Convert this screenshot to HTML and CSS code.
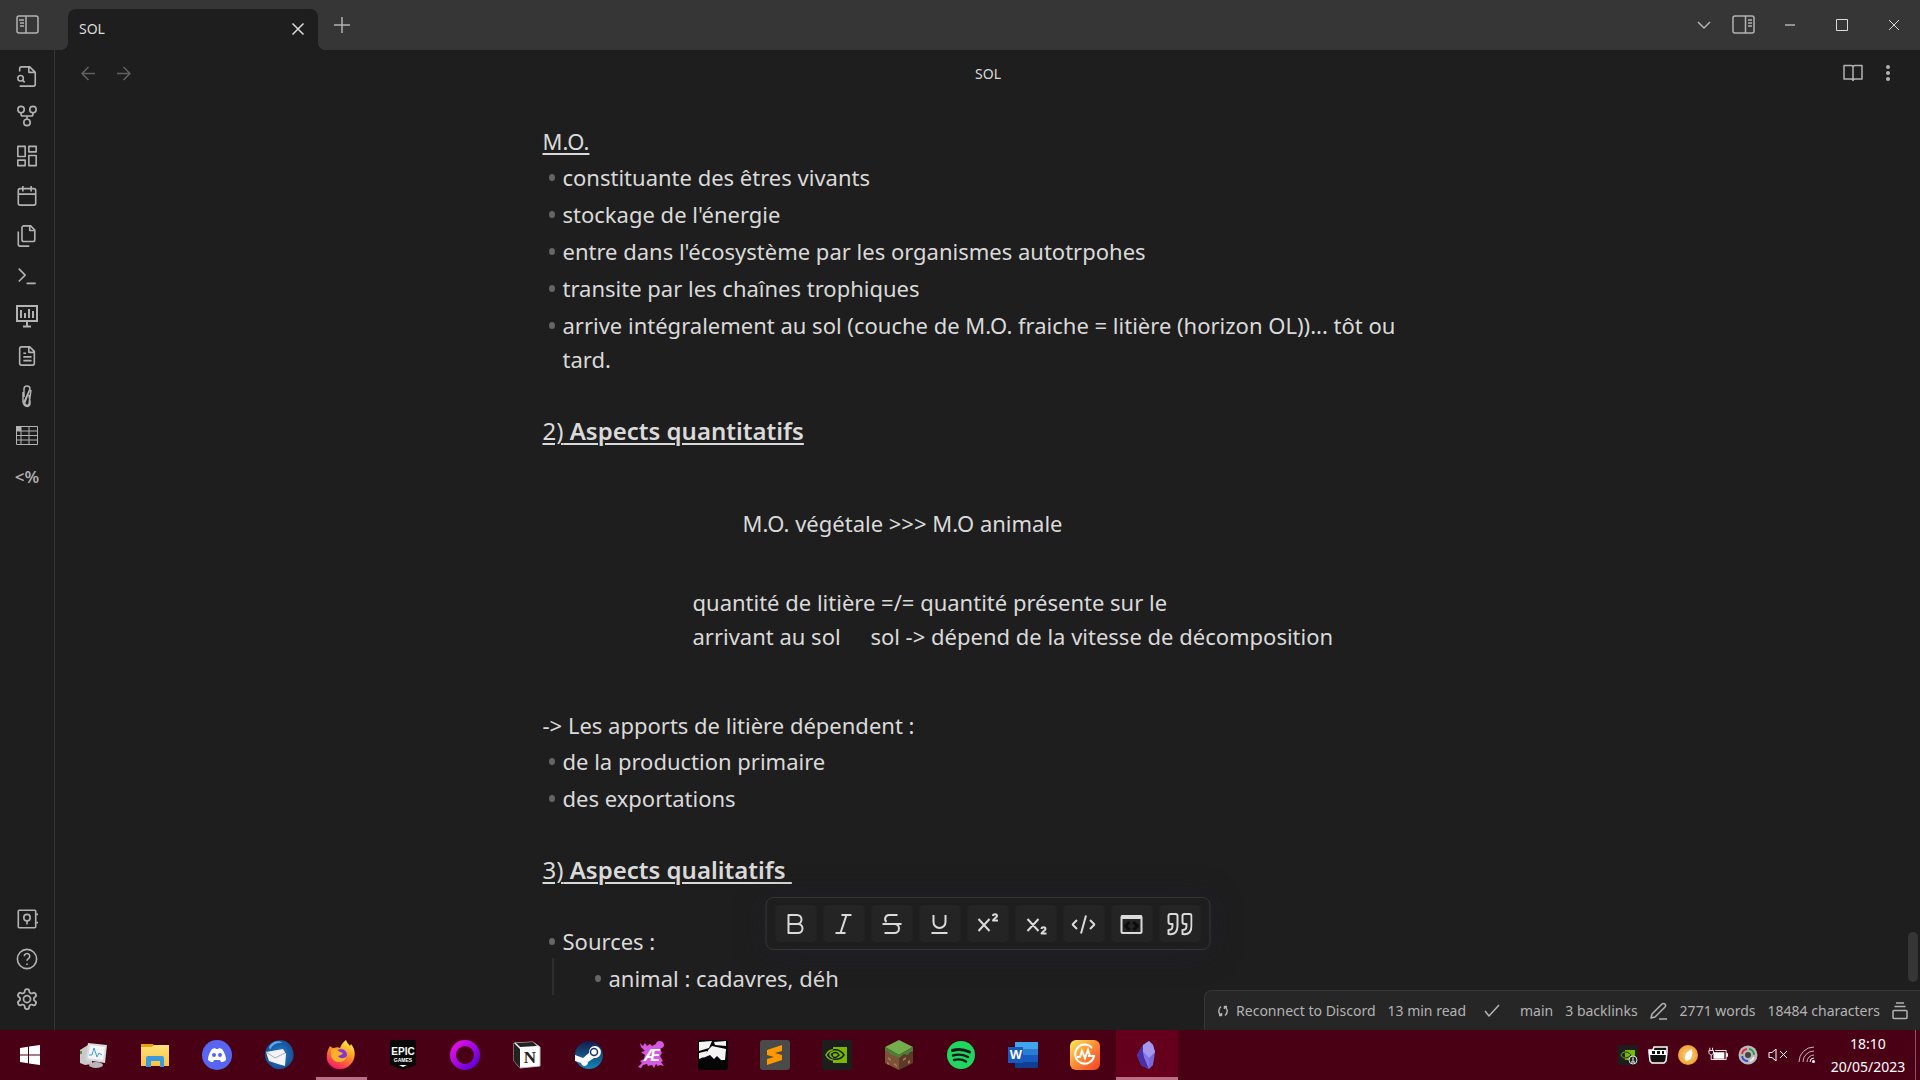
FILE: index.html
```html
<!DOCTYPE html>
<html lang="fr">
<head>
<meta charset="utf-8">
<title>SOL</title>
<link rel="stylesheet" href="styles.css">
</head>
<body>
<svg class="defs" aria-hidden="true">
  <defs>
    <linearGradient id="opera" x1="0" y1="0" x2="1" y2="1"><stop offset="0" stop-color="#e810e8"/><stop offset="1" stop-color="#5a00d8"/></linearGradient>
    <linearGradient id="steam" x1="0" y1="0" x2="0" y2="1"><stop offset="0" stop-color="#151a4a"/><stop offset="1" stop-color="#1387b8"/></linearGradient>
    <linearGradient id="gm" x1="0" y1="0" x2="1" y2="1"><stop offset="0" stop-color="#fdf05a"/><stop offset=".5" stop-color="#fb8a35"/><stop offset="1" stop-color="#f0402a"/></linearGradient>
    <linearGradient id="fox" x1=".8" y1="0" x2=".3" y2="1"><stop offset="0" stop-color="#fff44f"/><stop offset=".45" stop-color="#ff9420"/><stop offset="1" stop-color="#f5156c"/></linearGradient>
    <linearGradient id="folder" x1="0" y1="0" x2="0" y2="1"><stop offset="0" stop-color="#ffe07c"/><stop offset="1" stop-color="#fcc43c"/></linearGradient>
    <radialGradient id="bird"><stop offset="0" stop-color="#2a7fd8"/><stop offset="1" stop-color="#155093"/></radialGradient>
    <radialGradient id="amber"><stop offset="0" stop-color="#ffd98a"/><stop offset="1" stop-color="#f0a030"/></radialGradient>
  </defs>
</svg>
<div class="app">
  <header class="titlebar">
    <button class="icon-btn toggle-left" aria-label="Toggle left sidebar"><svg width="24" height="20" viewBox="0 0 24 20"><rect x="1" y="1" width="21" height="17" rx="2"/><path d="M10 1v17M3 5h5M4 8h4M4 11h4"/></svg></button>
    <div class="tab"><span>SOL</span><button class="icon-btn" aria-label="Close tab"><svg width="14" height="14" viewBox="0 0 14 14"><path class="bright" d="M1.500 1.500l11 11M12.500 1.500l-11 11"/></svg></button></div>
    <button class="icon-btn new-tab" aria-label="New tab"><svg width="16" height="16" viewBox="0 0 16 16"><path d="M8 0v16M0 8h16"/></svg></button>
    <div class="window-controls">
      <button class="icon-btn" aria-label="Tab list"><svg width="14" height="8" viewBox="0 0 14 8"><path d="M1 1l6 6 6-6"/></svg></button>
      <button class="icon-btn" aria-label="Toggle right sidebar"><svg width="24" height="20" viewBox="0 0 24 20"><rect x="1" y="1" width="21" height="17" rx="2"/><path d="M13.500 1v17M16 5h4M16 8h4M16 11h4"/></svg></button>
      <button class="icon-btn" aria-label="Minimize"><svg width="12" height="12" viewBox="0 0 12 12"><path d="M1 6h10"/></svg></button>
      <button class="icon-btn" aria-label="Maximize"><svg width="12" height="12" viewBox="0 0 12 12"><path class="thin" d="M.5.500h11v11H.5z"/></svg></button>
      <button class="icon-btn" aria-label="Close"><svg width="12" height="12" viewBox="0 0 12 12"><path class="thin" d="M1 1l10 10M11 1L1 11"/></svg></button>
    </div>
  </header>

  <div class="workspace">
    <nav class="ribbon">
      <button class="icon-btn" aria-label="Quick switcher"><svg width="22" height="22" viewBox="0 0 24 24"><path d="M4 7V4a2 2 0 0 1 2-2h9l6 6v13a2 2 0 0 1-2 2H4M14 2v6h6"/><circle cx="5" cy="14.500" r="3"/><path d="M7.500 17l2 2"/></svg></button>
      <button class="icon-btn" aria-label="Graph view"><svg width="22" height="22" viewBox="0 0 24 24"><circle cx="12" cy="19" r="3.500"/><circle cx="5.500" cy="5" r="3.500"/><circle cx="18.500" cy="5" r="3.500"/><path d="M5.500 8.500V10a2 2 0 0 0 2 2h9a2 2 0 0 0 2-2V8.500M12 12v3"/></svg></button>
      <button class="icon-btn" aria-label="Canvas"><svg width="22" height="22" viewBox="0 0 24 24"><path d="M2 1.500h8v11H2zM14 1.500h8v6h-8zM14 11.500h8v11h-8zM2 16.500h8v6H2z"/></svg></button>
      <button class="icon-btn" aria-label="Daily note"><svg width="22" height="22" viewBox="0 0 24 24"><rect x="2.500" y="4" width="19" height="18" rx="2"/><path d="M2.500 10h19M7.500 1v6M16.500 1v6"/></svg></button>
      <button class="icon-btn" aria-label="Templates"><svg width="22" height="22" viewBox="0 0 24 24"><path d="M16 1H8.500a2 2 0 0 0-2 2v13a2 2 0 0 0 2 2h10a2 2 0 0 0 2-2V5.500zM15 1v5h5M2.500 7v14a2 2 0 0 0 2 2h10"/></svg></button>
      <button class="icon-btn" aria-label="Command palette"><svg width="22" height="22" viewBox="0 0 24 24"><path d="M3 4l7 7-7 7M11.500 20h10"/></svg></button>
      <button class="icon-btn" aria-label="Slides"><svg width="22" height="24" viewBox="0 0 22 24"><path class="heavy" d="M1 2h20v15H1z"/><path class="heavy" d="M5 14V6M9 14V9M13 14V5M17 14V7M11 17v5M7 22.500h8"/></svg></button>
      <button class="icon-btn" aria-label="Document"><svg width="22" height="22" viewBox="0 0 24 24"><path d="M15 2H6a2 2 0 0 0-2 2v16a2 2 0 0 0 2 2h12a2 2 0 0 0 2-2V7zM14 2v6h6M8 9h3M8 13h9M8 17h9"/></svg></button>
      <button class="icon-btn" aria-label="Links"><svg width="22" height="24" viewBox="0 0 22 24"><path class="soft" d="M8 13V5a3 3 0 0 1 6 0l-5 13a2 2 0 0 0 4 2l2-14M7 8v10c1 6 8 6 7 0l-1-7M14 5l-6 13"/></svg></button>
      <button class="icon-btn" aria-label="Table"><svg width="22" height="20" viewBox="0 0 22 20"><path class="fine" d="M.5.500h21v18H.5zM.5 5h21M.5 9.500h21M.5 14h21M5 1v18M13 1v18"/><path class="solid" d="M0 0h5v5H0z"/></svg></button>
      <button class="icon-btn template" aria-label="Templater">&lt;%</button>
      <div class="spacer"></div>
      <button class="icon-btn" aria-label="Open vault"><svg width="22" height="22" viewBox="0 0 24 24"><rect x="2.500" y="2.500" width="19" height="19" rx="1"/><circle cx="12" cy="10.500" r="3.500"/><path d="M12 14v4M22 7h2M22 16h2"/></svg></button>
      <button class="icon-btn" aria-label="Help"><svg width="22" height="22" viewBox="0 0 24 24"><circle cx="12" cy="12" r="10.500"/><path d="M9 9a3 3 0 1 1 4.500 2.600c-1 .6-1.500 1-1.500 2.400M12 17v1.500"/></svg></button>
      <button class="icon-btn" aria-label="Settings"><svg width="22" height="22" viewBox="1 1 22 22"><path d="M12.220 2h-.44a2 2 0 0 0-2 2v.18a2 2 0 0 1-1 1.730l-.43.250a2 2 0 0 1-2 0l-.15-.08a2 2 0 0 0-2.730.730l-.22.380a2 2 0 0 0 .730 2.730l.150.100a2 2 0 0 1 1 1.720v.510a2 2 0 0 1-1 1.740l-.15.090a2 2 0 0 0-.73 2.730l.220.380a2 2 0 0 0 2.730.730l.150-.08a2 2 0 0 1 2 0l.430.250a2 2 0 0 1 1 1.730V20a2 2 0 0 0 2 2h.44a2 2 0 0 0 2-2v-.18a2 2 0 0 1 1-1.730l.430-.25a2 2 0 0 1 2 0l.150.080a2 2 0 0 0 2.730-.73l.220-.39a2 2 0 0 0-.73-2.730l-.15-.08a2 2 0 0 1-1-1.740v-.5a2 2 0 0 1 1-1.740l.150-.09a2 2 0 0 0 .730-2.730l-.22-.38a2 2 0 0 0-2.730-.73l-.15.080a2 2 0 0 1-2 0l-.43-.25a2 2 0 0 1-1-1.730V4a2 2 0 0 0-2-2z"/><circle cx="12" cy="12" r="3.500"/></svg></button>
    </nav>

    <main class="pane">
      <div class="view-header">
        <button class="icon-btn dim" aria-label="Back"><svg width="15" height="15" viewBox="0 0 15 15"><path d="M14 7.500H1M7.500 1L1 7.500 7.500 14"/></svg></button>
        <button class="icon-btn dim" aria-label="Forward"><svg width="15" height="15" viewBox="0 0 15 15"><path d="M1 7.500h13M7.500 1L14 7.500 7.500 14"/></svg></button>
        <h1 class="view-title">SOL</h1>
        <button class="icon-btn" aria-label="Reading view"><svg width="20" height="18" viewBox="0 0 20 18"><path d="M10 3c0-1-1-1.500-2-1.500H1V15h7c1 0 2 .5 2 1.500 0-1 1-1.500 2-1.500h7V1.500h-7c-1 0-2 .5-2 1.500zv14"/></svg></button>
        <button class="icon-btn" aria-label="More options"><svg width="6" height="18" viewBox="0 0 6 18"><g class="solid"><circle cx="3" cy="3" r="2"/><circle cx="3" cy="9" r="2"/><circle cx="3" cy="15" r="2"/></g></svg></button>
      </div>

      <article class="note">
        <p><u>M.O.</u></p>
        <ul>
          <li>constituante des êtres vivants</li>
          <li>stockage de l'énergie</li>
          <li>entre dans l'écosystème par les organismes autotrpohes</li>
          <li>transite par les chaînes trophiques</li>
          <li>arrive intégralement au sol (couche de M.O. fraiche = litière (horizon OL))... tôt ou tard.</li>
        </ul>
        <h2><span>2)</span> Aspects quantitatifs</h2>
        <p class="formula wide">M.O. végétale &gt;&gt;&gt; M.O animale</p>
        <p class="formula">quantité de litière =/= quantité présente sur le<br>arrivant au sol <span class="second">sol -&gt; dépend de la vitesse de décomposition</span></p>
        <p class="lead">-&gt; Les apports de litière dépendent :</p>
        <ul>
          <li>de la production primaire</li>
          <li>des exportations</li>
        </ul>
        <h2><span>3)</span> Aspects qualitatifs&nbsp;</h2>
        <ul>
          <li>Sources :
            <ul><li>animal : cadavres, déh</li></ul>
          </li>
        </ul>
      </article>

      <div class="format-bar" role="toolbar" aria-label="Format">
        <button aria-label="Bold"><svg width="24" height="24" viewBox="0 0 24 24"><path d="M5 3h8.500a4.500 4.500 0 0 1 0 9H5zM5 12h9.500a4.500 4.500 0 0 1 0 9H5z"/></svg></button>
        <button aria-label="Italic"><svg width="24" height="24" viewBox="0 0 24 24"><path d="M10 3h10M4 21h10M15 3L9 21"/></svg></button>
        <button aria-label="Strikethrough"><svg width="24" height="24" viewBox="0 0 24 24"><path d="M18 3h-8a4 4 0 0 0-3 7M3 12h19M14 12h1a4.500 4.500 0 0 1 0 9H5"/></svg></button>
        <button aria-label="Underline"><svg width="24" height="24" viewBox="0 0 24 24"><path d="M6 3v7a6 6 0 0 0 12 0V3M4 21h16"/></svg></button>
        <button aria-label="Superscript"><svg width="24" height="24" viewBox="0 0 24 24"><path d="M3 7l11 12M14 7L3 19M17.500 4c0-2.500 4-2.500 4 0 0 1.500-4 3-4 4.500h5"/></svg></button>
        <button aria-label="Subscript"><svg width="24" height="24" viewBox="0 0 24 24"><path d="M4 7l11 12M15 7L4 19M18 17c0-2.500 4-2.500 4 0 0 1.500-4 3-4 4.500h5"/></svg></button>
        <button aria-label="Code"><svg width="24" height="24" viewBox="0 0 24 24"><path d="M5.500 8L1 12.500 5.500 17M18.500 8l4.500 4.500-4.500 4.500M14.500 3.500l-5 18"/></svg></button>
        <button aria-label="Code block"><svg width="24" height="24" viewBox="0 0 24 24"><rect x="2" y="4" width="20" height="17" rx="1"/><path class="solid" d="M2 3h20v4H2z"/><path class="dark" d="M10 10l-4 4 4 4M14 10l4 4-4 4"/></svg></button>
        <button aria-label="Quote"><svg width="26" height="24" viewBox="0 0 26 24"><path d="M2 22c7 1 9-3 9-8V4a2 2 0 0 0-2-2H4a2 2 0 0 0-2 2v6a2 2 0 0 0 2 2h2c0 4 0 6-4 6zM16 22c7 1 9-3 9-8V4a2 2 0 0 0-2-2h-5a2 2 0 0 0-2 2v6a2 2 0 0 0 2 2h2c0 4 0 6-4 6z"/></svg></button>
      </div>
      <div class="scroll-thumb"></div>

      <footer class="status">
        <span class="discord"><svg width="10" height="12" viewBox="0 0 10 12"><path d="M3 1.500C0 4 0 8 3 10.500M1 10.500h2.500V8M7 10.500C10 8 10 4 7 1.500M9 1.500H6.500V4"/></svg>Reconnect to Discord</span>
        <span class="read-time">13 min read</span>
        <svg width="16" height="14" viewBox="0 0 16 14"><path d="M1 7l4 5L15 1"/></svg>
        <span class="branch">main</span>
        <span>3 backlinks</span>
        <svg width="18" height="18" viewBox="0 0 18 18"><path d="M2 12L12 2a2 2 0 0 1 3 3L5 15l-4 1zM9 17h8"/></svg>
        <span>2771 words</span>
        <span>18484 characters</span>
        <svg width="16" height="18" viewBox="0 0 16 18"><path d="M4 1h8M2.500 4.500h11M2 8.500h12a1 1 0 0 1 1 1v6a1 1 0 0 1-1 1H2a1 1 0 0 1-1-1v-6a1 1 0 0 1 1-1z"/></svg>
      </footer>
    </main>
  </div>

  <footer class="taskbar">
    <div class="apps">
      <button class="start" aria-label="Start"><svg width="20" height="20" viewBox="0 0 20 20"><path fill="#fff" d="M0 3l8-1.200V9.500H0zM9 1.600L20 0v9.500H9zM0 10.500h8v7.700L0 17zM9 10.500h11V20L9 18.400z"/></svg></button>
      <button aria-label="Resource monitor"><svg width="30" height="30" viewBox="0 0 30 30"><path fill="#c9c9c9" d="M2 10l8-5 4 3v16l-7 1-5-2z"/><path fill="#3c9c3c" d="M2 11h2v3H2z"/><path fill="#d8dadb" d="M10 3l19 2-2 18-19-3z"/><path fill="#f4f8fa" d="M12 5l15 2-2 13-15-2z"/><path fill="none" stroke="#3c9bd0" d="M11 15h3l2-7 3 9 2-4 3 2"/><ellipse cx="18" cy="25" rx="7" ry="3" fill="#b8b8b8"/></svg></button>
      <button aria-label="File Explorer"><svg width="30" height="30" viewBox="0 0 30 30"><path fill="#e9a20b" d="M1 4h12l2 3v3H1z"/><path fill="url(#folder)" d="M1 7h11l2-2h15v21H1z"/><path fill="#3a9ae0" d="M6 26V18a2 2 0 0 1 2-2h14a2 2 0 0 1 2 2v9h-4v-6h-9v6H6z"/></svg></button>
      <button aria-label="Discord"><svg width="30" height="30" viewBox="0 0 30 30"><circle cx="15" cy="15" r="15" fill="#5865f2"/><path fill="#fff" d="M10 9l3-1 1 1h2l1-1 3 1c3 4 4 8 4 11-2 2-4 2-5 2l-1-2h-6l-1 2c-1 0-3 0-5-2 0-3 1-7 4-11z"/><circle cx="12" cy="15" r="2" fill="#5865f2"/><circle cx="18" cy="15" r="2" fill="#5865f2"/></svg></button>
      <button aria-label="Thunderbird"><svg width="30" height="30" viewBox="0 0 30 30"><path fill="url(#bird)" d="M7 3c6-4 16-4 20 3 4 7 4 14-3 20-6 5-14 4-18-1C-1 20-1 9 7 3z"/><path fill="#56b0f0" d="M5 7C8 1 15 0 19 3c-6-1-11 2-13 7z"/><path fill="#f4f4f6" d="M2 12l17-3 3 5-1 12-7-2-9-3z"/><path fill="none" stroke="#aab" d="M2 12l9 6 10-5"/></svg></button>
      <button class="running" aria-label="Firefox"><svg width="30" height="30" viewBox="0 0 30 30"><path fill="url(#fox)" d="M4 6c1 1 2 2 4 2 2-1 4-1 6 0 1-3 3-6 6-8 1 3 3 4 4 6l1-2c5 6 5 14 0 20s-14 7-20 2C-1 21 0 12 4 6z"/><circle cx="15" cy="15" r="6" fill="#8038d8"/><path fill="#ffb229" d="M5 10c4-2 7 0 9 2l3 1c-1 2-3 2-5 3 2 3 6 3 9 0-1 7-13 9-16 0z"/></svg></button>
      <button aria-label="Epic Games"><svg width="26" height="30" viewBox="0 0 26 30"><path fill="#080808" d="M2 0h22a2 2 0 0 1 2 2v23l-13 5-13-5V2a2 2 0 0 1 2-2z"/><text x="13" y="15" class="epic">EPIC</text><text x="13" y="22" class="games">GAMES</text><path fill="#fff" d="M9 25h8l-4 2z"/></svg></button>
      <button aria-label="Opera GX"><svg width="30" height="30" viewBox="0 0 30 30"><circle cx="15" cy="15" r="12" fill="none" stroke="url(#opera)" stroke-width="6"/></svg></button>
      <button aria-label="Notion"><svg width="28" height="28" viewBox="0 0 28 28"><path fill="#fff" stroke="#bbb" d="M1 2l19-1 7 5v19l-20 2-6-7z"/><path fill="#222" d="M1 2l6 6v19l-6-7zM3 2l17-1 4 4-17 1z"/><path fill="#fff" d="M8 8l18-1v18L8 26z"/><text x="17" y="22" class="notion">N</text></svg></button>
      <button aria-label="Steam"><svg width="28" height="28" viewBox="0 0 28 28"><circle cx="14" cy="14" r="14" fill="url(#steam)"/><path fill="#fff" d="M0 14l8 3 6-5a6 6 0 1 1 5 5l-6 4c0 5-6 5-7 1l-6-2z"/><circle cx="19" cy="11" r="3.500" fill="#fff" stroke="#1b3765" stroke-width="1.500"/></svg></button>
      <button aria-label="Aether"><svg width="30" height="30" viewBox="0 0 30 30"><path fill="#d45ae4" d="M4 3l3 3 2-3 2 3 3-2 2 2 4-2c0-4 8-4 8 1 0 3-3 3-4 4l2 4-2 3 3 5-2 1 3 4-4-1-2 1-2-2-2 4-2-3-4 1-1-2-4 1-2 3-3-1 4-4-2-2 4-2 1-4-4-3 4-1-4-4z"/><text x="16" y="21" class="ae">Æ</text></svg></button>
      <button aria-label="Image viewer"><svg width="30" height="30" viewBox="0 0 30 30"><rect width="30" height="30" rx="3" fill="#050505"/><path fill="#f4f4f4" d="M1 2l13-1-3 7-10 3zM16 2l12-1v5l-11-1zM11 9l3-3 14 3-1 11-4 0-4-4-3 3-4-4-7 3z"/><path fill="#f4f4f4" d="M1 13l8-2-1 5-7 3z"/></svg></button>
      <button aria-label="Sublime Text"><svg width="30" height="30" viewBox="0 0 30 30"><rect width="30" height="30" rx="3" fill="#4a4a4a"/><path fill="#ff9800" d="M7 10l15-5v6l-7 2 7 2v5L7 25v-6l7-2-7-2z"/></svg></button>
      <button aria-label="NVIDIA"><svg width="30" height="30" viewBox="0 0 30 30"><path fill="#1d1d1d" d="M0 0h30v30H0z"/><path fill="#76b900" d="M11 7h14v16H11z"/><path fill="none" stroke="#76b900" stroke-width="1.500" d="M11 10c-4 0-6 3-7 5 2 4 4 5 7 5M11 12c-3 0-3 2-3 3 1 2 2 3 4 3 3 0 4-2 5-3"/><path fill="none" stroke="#1d1d1d" stroke-width="1.500" d="M11 10c6-1 9 2 11 5-3 4-6 5-11 4M11 13c3-1 5 0 6 2-2 2-3 3-6 2"/></svg></button>
      <button aria-label="Minecraft"><svg width="30" height="30" viewBox="0 0 30 30"><path fill="#73ad4c" d="M15 0l14 7-14 8L1 7z"/><path fill="#7b5339" d="M1 7l14 8v15L1 23z"/><path fill="#5b3b28" d="M29 7l-14 8v15l14-7z"/><path fill="#4c8034" d="M1 7l14 8 14-8v4l-3 1-2 3-4-1-5 4-3-2-3-1-3-1-2-3-3-1z"/><path fill="#a77a58" d="M4 17l3 2v2l-3-2zM10 23l3 2v2l-3-2zM3 22l2 1v2l-2-1zM19 19l3-2v2l-3 2zM24 21l2-1v3l-2 1z"/></svg></button>
      <button aria-label="Spotify"><svg width="28" height="28" viewBox="0 0 28 28"><circle cx="14" cy="14" r="14" fill="#1ed760"/><path fill="none" stroke="#181818" stroke-linecap="round" stroke-width="3" d="M5.500 9.500c6-2 12-1 17 1.500"/><path fill="none" stroke="#181818" stroke-linecap="round" stroke-width="2.400" d="M6 14.500c5-1.500 10-1 15 1.500M7 19c4-1 8-1 12 1.500"/></svg></button>
      <button aria-label="Word"><svg width="30" height="26" viewBox="0 0 30 26"><path fill="#41a5ee" d="M7 0h23v7H7z"/><path fill="#2b7cd3" d="M7 7h23v6H7z"/><path fill="#185abd" d="M7 13h23v7H7z"/><path fill="#103f91" d="M7 20h23v6H7z"/><path fill="#185abd" d="M0 5h15v16H0z"/><text x="8" y="17" class="word">W</text></svg></button>
      <button aria-label="Gamma"><svg width="30" height="30" viewBox="0 0 30 30"><rect width="30" height="30" rx="6" fill="url(#gm)"/><path fill="none" stroke="#fff" stroke-width="2" d="M22 8a9.500 9.500 0 1 0 2 8h-6M7 17h3l2-6 3 7 3-8 2 6"/></svg></button>
      <button class="active" aria-label="Obsidian"><svg width="20" height="28" viewBox="0 0 20 28"><path fill="#7a67d8" d="M12 0l4 4 2 7-2 13-4 4-8-4-4-10L6 4z"/><path fill="#4731a8" d="M0 14l6-10 1 12 5 12-8-4z"/><path fill="#a596ee" d="M12 0l4 4 2 7-6 6-6-6V4z"/><path fill="#8674e2" d="M6 11l6 6v11L7 16z"/></svg></button>
    </div>
    <div class="tray">
      <svg width="20" height="20" viewBox="0 0 20 20"><path fill="#1d1d1d" d="M0 0h20v20H0z"/><path fill="#76b900" d="M7 5h10v10H7z"/><path fill="none" stroke="#76b900" d="M7 7c-3 0-4 3-4 3 1 2 2 3 4 3"/><path fill="none" stroke="#1d1d1d" d="M7 7c4 0 6 3 6 3-2 2-4 3-6 3"/><circle cx="15" cy="15" r="4" fill="#222" stroke="#ddd"/><path stroke="#fff" d="M15 12.500v4M13 17h4"/></svg>
      <svg width="20" height="20" viewBox="0 0 20 20"><path fill="#111" stroke="#fff" stroke-width="1.500" d="M5 5l1-3h13v5l-1 9-2 2H4l-2-2-1-9V5z"/><path fill="#fff" d="M1 5h17v5H1z"/><path fill="#111" d="M4 6h3v3H4zM9 6h3v3H9zM14 6h2v3h-2z"/></svg>
      <svg width="20" height="20" viewBox="0 0 20 20"><circle cx="10" cy="10" r="10" fill="url(#amber)"/><path fill="#fff" d="M14 4c1 8-1 11-6 12-3-4 0-9 6-12z"/></svg>
      <svg width="20" height="16" viewBox="0 0 22 16"><path fill="none" stroke="#fff" d="M1 3h5v3L4 8H3L1 6zM2 3V0M5 3V0M3.500 8v5H20V3H8"/><path fill="#fff" d="M6 5h12v7H6zM20 6h2v4h-2z"/></svg>
      <svg width="20" height="20" viewBox="0 0 20 20"><circle cx="10" cy="10" r="9.500" fill="#b9b9bd"/><circle cx="10" cy="10" r="3" fill="#444"/><g fill="none" stroke-width="2"><path stroke="#d33" d="M4 9a6 6 0 0 1 5-5"/><path stroke="#2b9b45" d="M11 4a6 6 0 0 1 5 6"/><path stroke="#3450cc" d="M4 11a6 6 0 0 0 6 5"/><path stroke="#eee" d="M12 16a6 6 0 0 0 4-4"/></g></svg>
      <svg width="20" height="14" viewBox="0 0 20 14"><path fill="none" stroke="#fff" d="M1 4.500h3L8 1v12L4 9.500H1zM12 3l7 7M19 3l-7 7"/></svg>
      <svg width="18" height="18" viewBox="0 0 18 18"><g fill="none" stroke="#c9b5ba"><path d="M1 16A15 15 0 0 1 16 1M5 16A11 11 0 0 1 16 5M9 16a7 7 0 0 1 7-7"/><path stroke="#fff" d="M12 16a4 4 0 0 1 4-4"/></g><circle cx="15.500" cy="15.500" r="1.500" fill="#fff"/></svg>
      <time class="clock" datetime="2023-05-20T18:10"><span>18:10</span><span>20/05/2023</span></time>
    </div>
  </footer>
</div>
</body>
</html>
```
FILE: styles.css
```css
* { box-sizing: border-box; }
body {
  margin: 0;
  background: #1e1e1e;
  color: #dadada;
  font-family: "Noto Sans", "Open Sans", sans-serif;
  font-size: 14px;
}
button { border: 0; padding: 0; background: none; color: inherit; font: inherit; display: flex; align-items: center; justify-content: center; }
svg { display: block; flex: none; }
.defs { position: absolute; width: 0; height: 0; }
.app { display: flex; flex-direction: column; height: 100vh; }

.titlebar svg, .ribbon svg, .view-header svg, .status svg, .format-bar svg { fill: none; stroke: #b3b3b3; stroke-width: 2; stroke-linejoin: round; }
.titlebar svg, .view-header svg, .status svg { stroke-width: 1.5; }
svg .solid { fill: #b3b3b3; stroke: none; }
svg .bright { stroke: #dadada; }
svg .thin { stroke-width: 1; stroke: #dadada; }
svg .fine { stroke-width: 1; }
svg .soft { stroke-width: 1.5; }

.titlebar { display: flex; height: 50px; flex: none; background: #363636; }
.toggle-left { width: 55px; height: 50px; }
.tab {
  position: relative;
  display: flex; align-items: center; justify-content: space-between;
  width: 250px; margin: 9px 0 0 13px; padding: 0 13px 2px 11px;
  border-radius: 8px 8px 0 0; background: #1e1e1e;
}
.tab::before, .tab::after { content: ""; position: absolute; bottom: 0; width: 8px; height: 8px; }
.tab::before { right: 100%; background: radial-gradient(circle at 0 0, transparent 8px, #1e1e1e 8px); }
.tab::after { left: 100%; background: radial-gradient(circle at 100% 0, transparent 8px, #1e1e1e 8px); }
.new-tab { width: 47px; height: 50px; }
.window-controls { display: flex; margin-left: auto; }
.window-controls .icon-btn { width: 52px; height: 50px; }
.window-controls .icon-btn:nth-child(-n+2) { width: 40px; }

.workspace { display: flex; flex: 1; min-height: 0; }
.ribbon { display: flex; flex-direction: column; width: 55px; padding: 6px 0 11px; border-right: 1px solid #363636; }
.ribbon svg { stroke-width: 1.75; }
.ribbon .icon-btn { height: 40px; }
.ribbon .spacer { flex: 1; }
.ribbon .heavy { stroke-width: 2; stroke-linejoin: miter; }
.ribbon .template { color: #b3b3b3; font-family: "Open Sans", sans-serif; font-size: 17px; font-weight: 600; }

.pane { position: relative; flex: 1; min-width: 0; display: flex; flex-direction: column; }
.view-header { display: flex; align-items: center; height: 48px; flex: none; padding: 0 15px 2px 16px; }
.view-header .icon-btn { width: 35px; height: 40px; }
.dim { opacity: .45; }
.view-title { flex: 1; margin: 0; text-align: center; font-size: 14px; font-weight: 400; }

.note { width: 100%; max-width: 904px; margin: 0 auto; padding: 26px 24px 0 7px; font-size: 22px; line-height: 34px; }
.note p, .note h2, .note ul { margin: 0; padding: 0; }
.note ul { list-style: none; }
.note li { position: relative; padding: 3px 0 0 20px; }
.note > ul > li:first-child { padding-top: 2px; }
.note li::before { content: ""; position: absolute; left: 6px; top: 17px; width: 6px; height: 7px; border-radius: 50%; background: #666; }
.note > ul > li:first-child::before { top: 16px; }
.note u, .note h2 { text-decoration: underline; text-decoration-thickness: 2px; text-underline-offset: 3px; }
.note h2 { margin: 37px 0 34px; font-size: 24px; font-weight: 600; line-height: 36px; }
.note h2 span { font-weight: 400; }
.note .formula { margin: 0 0 45px 150px; }
.note .formula.wide { margin: 57px 0 45px 200px; }
.note .second { padding-left: 24px; }
.note .lead { margin-top: 55px; }
.note li ul { border-left: 2px solid #2e2e2e; margin-left: -11px; padding-left: 35px; }

.format-bar {
  position: absolute; left: 50%; bottom: 80px; transform: translateX(-50%);
  display: flex; gap: 7px; padding: 7px 9px;
  border: 1px solid #363636; border-radius: 8px; background: #1e1e1e;
  box-shadow: 0 2px 32px rgba(34, 34, 60, .4);
}
.format-bar button { width: 41px; height: 37px; border-radius: 4px; background: #242424; }
.format-bar svg { stroke: #dadada; }
.format-bar .solid { fill: #dadada; }
.format-bar .dark { stroke: #0c0c0c; stroke-width: 3; }
.scroll-thumb { position: absolute; right: 2px; bottom: 48px; width: 10px; height: 50px; border-radius: 5px; background: #363636; }
.status {
  position: absolute; right: 0; bottom: 0;
  display: flex; align-items: center; gap: 12px;
  height: 40px; padding: 0 12px 0 13px;
  border: 1px solid #363636; border-width: 1px 0 0 1px; border-radius: 8px 0 0 0;
  background: #262626; color: #b3b3b3; white-space: nowrap;
}
.status .discord { display: flex; align-items: center; gap: 8px; }
.status .read-time { margin-right: 6px; }
.status .branch { margin-left: 8px; }

.taskbar { display: flex; justify-content: space-between; flex: none; height: 50px; background: #4a0014; color: #fff; }
.apps { display: flex; }
.apps button { width: 62px; height: 50px; }
.apps .start { width: 60px; margin-right: 2px; }
.apps .running { background: linear-gradient(#b97086, #b97086) center bottom / 51px 3px no-repeat; }
.apps .active { background: linear-gradient(#b97086, #b97086) bottom / 100% 3px no-repeat #65001c; }
.apps text { fill: #fff; text-anchor: middle; font-family: "Liberation Sans", sans-serif; font-weight: 700; }
.apps .epic { font-size: 10px; }
.apps .games { font-size: 5px; }
.apps .notion { fill: #222; font-family: "Liberation Serif", serif; font-size: 17px; }
.apps .ae { font-size: 16px; font-style: italic; }
.apps .word { font-size: 13px; }
.tray { display: flex; align-items: center; gap: 10px; padding-right: 5px; border-right: 1px solid #8a5563; margin-right: 4px; }
.clock { display: flex; flex-direction: column; width: 84px; text-align: center; line-height: 23px; font-size: 14px; }
```
